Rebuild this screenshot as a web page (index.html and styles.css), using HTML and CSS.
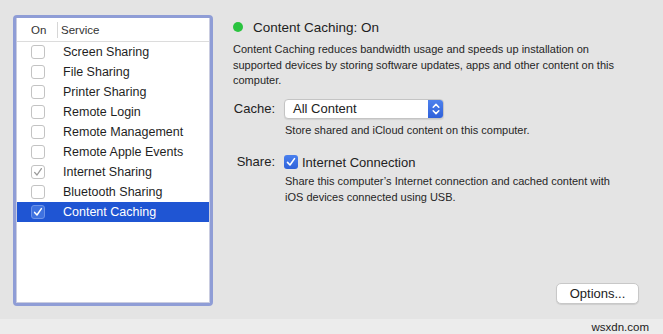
FILE: index.html
```html
<!DOCTYPE html>
<html>
<head>
<meta charset="utf-8">
<link rel="stylesheet" href="styles.css">
</head>
<body>
<div class="window">
  <div class="main">
    <div class="list">
      <div class="list-inner">
        <div class="list-head">
          <div class="col-on">On</div>
          <div class="col-div"></div>
          <div class="col-service">Service</div>
        </div>
        <div class="row"><span class="cb"></span><span class="name">Screen Sharing</span></div>
        <div class="row"><span class="cb"></span><span class="name">File Sharing</span></div>
        <div class="row"><span class="cb"></span><span class="name">Printer Sharing</span></div>
        <div class="row"><span class="cb"></span><span class="name">Remote Login</span></div>
        <div class="row"><span class="cb"></span><span class="name">Remote Management</span></div>
        <div class="row"><span class="cb"></span><span class="name">Remote Apple Events</span></div>
        <div class="row"><span class="cb"><svg viewBox="0 0 14 14" width="14" height="14"><path d="M3.6 7.4 L6 10 L10.4 3.6" fill="none" stroke="#9a9a9a" stroke-width="1.3" stroke-linecap="round" stroke-linejoin="round"/></svg></span><span class="name">Internet Sharing</span></div>
        <div class="row"><span class="cb"></span><span class="name">Bluetooth Sharing</span></div>
        <div class="row selected"><span class="cb cb-sel"><svg viewBox="0 0 14 14" width="14" height="14"><path d="M3.6 7.4 L6 10 L10.4 3.6" fill="none" stroke="#ffffff" stroke-width="1.5" stroke-linecap="round" stroke-linejoin="round"/></svg></span><span class="name">Content Caching</span></div>
      </div>
    </div>
    <div class="detail">
      <div class="status">
        <span class="dot"></span>
        <span class="status-text">Content Caching: On</span>
      </div>
      <p class="desc">Content Caching reduces bandwidth usage and speeds up installation on supported devices by storing software updates, apps and other content on this computer.</p>
      <div class="field cache-field">
        <div class="label">Cache:</div>
        <div class="field-body">
          <div class="popup">
            <span class="popup-text">All Content</span>
            <span class="stepper"><svg viewBox="0 0 16 20" width="16" height="20"><path d="M5.2 8.2 L8 5.4 L10.8 8.2 M5.2 11.8 L8 14.6 L10.8 11.8" fill="none" stroke="#fff" stroke-width="1.5" stroke-linecap="round" stroke-linejoin="round"/></svg></span>
          </div>
          <div class="hint">Store shared and iCloud content on this computer.</div>
        </div>
      </div>
      <div class="field share-field">
        <div class="label">Share:</div>
        <div class="field-body">
          <div class="check-line">
            <span class="bcb"><svg viewBox="0 0 14 14" width="14" height="14"><path d="M3.5 7.4 L6 10 L10.5 3.6" fill="none" stroke="#fff" stroke-width="1.6" stroke-linecap="round" stroke-linejoin="round"/></svg></span>
            <span class="check-text">Internet Connection</span>
          </div>
          <div class="hint share-hint">Share this computer’s Internet connection and cached content with iOS devices connected using USB.</div>
        </div>
      </div>
      <div class="spacer"></div>
      <div class="actions">
        <button class="btn">Options...</button>
      </div>
    </div>
  </div>
  <div class="footer"><span class="wm">wsxdn.com</span></div>
</div>
</body>
</html>
```
FILE: styles.css
```css
* { box-sizing: border-box; }
html, body { margin: 0; padding: 0; }
body {
  width: 663px;
  height: 334px;
  overflow: hidden;
  background: #e4e4e4;
  font-family: "Liberation Sans", Arial, sans-serif;
  color: #222;
}
.window {
  display: flex;
  flex-direction: column;
  height: 334px;
}
.main {
  flex: 1;
  display: flex;
  padding: 15px 24px 13px 13px;
  min-width: 0;
}
.list {
  width: 200px;
  height: 291px;
  border: 3px solid #8f9dd6;
  border-radius: 4px;
  background: #fff;
  flex-shrink: 0;
}
.list-inner {
  height: 100%;
  border: 1px solid #c9cce0;
  border-top: none;
  background: #fff;
}
.list-head {
  height: 24px;
  display: flex;
  align-items: center;
  border-bottom: 1px solid #dcdcdc;
  font-size: 11.5px;
  color: #333;
}
.col-on { width: 40px; padding-left: 14px; }
.col-div { width: 1px; height: 16px; background: #d6d6d6; }
.col-service { padding-left: 3px; }
.row {
  height: 20px;
  display: flex;
  align-items: center;
  font-size: 12.5px;
  color: #1f1f1f;
}
.row.selected { background: #1f55d3; color: #fff; }
.cb {
  width: 14px;
  height: 14px;
  margin-left: 14px;
  border: 1px solid #c3c3c3;
  border-radius: 3px;
  background: #fff;
  display: flex;
  position: relative;
}
.cb svg { position: absolute; left: -1px; top: -1px; }
.cb-sel { background: #3f72e0; border-color: #6d93e8; }
.name { margin-left: 18px; }
.detail {
  flex: 1;
  min-width: 0;
  display: flex;
  flex-direction: column;
  padding-left: 16px;
}
.status {
  display: flex;
  align-items: center;
  height: 24px;
}
.dot {
  width: 10px;
  height: 10px;
  border-radius: 50%;
  background: #2ac33f;
  margin-left: 4px;
}
.status-text {
  margin-left: 10px;
  font-size: 13.5px;
  color: #1e1e1e;
}
.desc {
  margin: 3px 0 0 4px;
  font-size: 11px;
  line-height: 15.5px;
  color: #262626;
  width: 400px;
}
.field {
  display: flex;
  align-items: flex-start;
}
.label {
  width: 55px;
  flex-shrink: 0;
  text-align: right;
  font-size: 13px;
  color: #222;
  padding-right: 9px;
  line-height: 20px;
}
.cache-field { margin-top: 10px; }
.share-field { margin-top: 14px; }
.field-body { display: flex; flex-direction: column; min-width: 0; }
.popup {
  width: 160px;
  height: 20px;
  display: flex;
  align-items: center;
  background: #fff;
  border: 1px solid #c4c4c4;
  border-radius: 4px;
  box-shadow: 0 1px 1px rgba(0,0,0,0.08);
  overflow: hidden;
}
.popup-text {
  flex: 1;
  padding-left: 8px;
  font-size: 13px;
  color: #222;
}
.stepper {
  width: 16px;
  height: 20px;
  background: linear-gradient(#4f83ee, #2d5fd9);
  display: flex;
  align-items: center;
  justify-content: center;
  margin-right: -1px;
  border-radius: 0 4px 4px 0;
}
.hint {
  font-size: 11px;
  line-height: 15.5px;
  color: #262626;
  margin-top: 4px;
  margin-left: 1px;
  width: 360px;
}
.share-hint { width: 340px; margin-top: 2px; }
.check-line {
  display: flex;
  align-items: center;
  height: 20px;
}
.bcb {
  width: 14px;
  height: 14px;
  border-radius: 3px;
  background: linear-gradient(#4a80ee, #2e62da);
  display: flex;
}
.check-text {
  margin-left: 4px;
  font-size: 13px;
  color: #222;
}
.spacer { flex: 1; }
.actions {
  display: flex;
  justify-content: flex-end;
  padding-bottom: 2px;
}
.btn {
  width: 83px;
  height: 21px;
  background: #fff;
  border: 1px solid #c8c8c8;
  border-radius: 5px;
  box-shadow: 0 1px 1px rgba(0,0,0,0.1);
  font-family: "Liberation Sans", Arial, sans-serif;
  font-size: 13px;
  color: #222;
  padding: 0;
}
.footer {
  height: 15px;
  background: #ececec;
  display: flex;
  justify-content: flex-end;
  align-items: center;
  padding-right: 14px;
}
.wm {
  font-size: 11.5px;
  color: #222;
}
```
